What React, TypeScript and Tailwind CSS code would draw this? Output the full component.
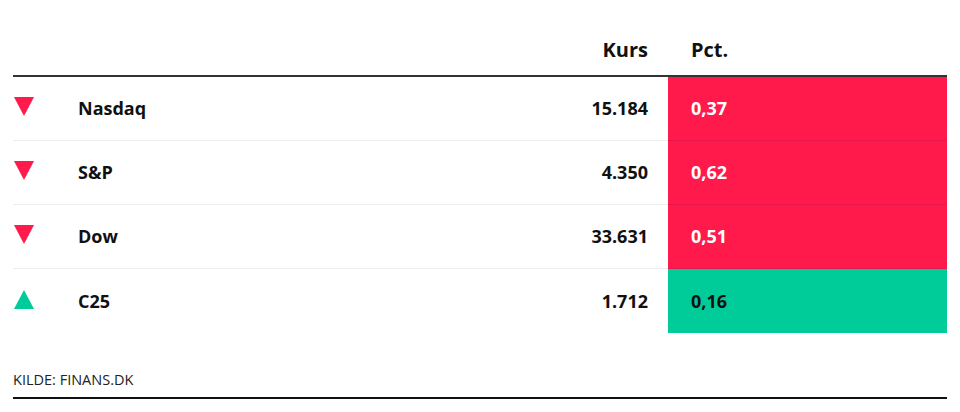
const rows = [
  { name: "Nasdaq", kurs: "15.184", pct: "0,37", up: false },
  { name: "S&P", kurs: "4.350", pct: "0,62", up: false },
  { name: "Dow", kurs: "33.631", pct: "0,51", up: false },
  { name: "C25", kurs: "1.712", pct: "0,16", up: true },
];

function Arrow({ up }: { up: boolean }) {
  return (
    <svg width="20" height="19" viewBox="0 0 20 19" className="block">
      {up ? (
        <polygon points="10,0 20,19 0,19" fill="#00cc99" />
      ) : (
        <polygon points="0,0 20,0 10,19" fill="#ff1a4b" />
      )}
    </svg>
  );
}

export default function App() {
  return (
    <div className="w-[960px] h-[412px] bg-white px-[13px] text-[#111] font-['Open_Sans',sans-serif]">
      <div className="flex h-[75px] items-end pb-[10px] text-[20px] font-bold">
        <div className="flex-1" />
        <div className="w-[200px] pr-[20px] text-right">Kurs</div>
        <div className="w-[279px] pl-[23px]">Pct.</div>
      </div>
      <div className="border-t-2 border-[#333]">
        {rows.map((r, i) => {
          const last = i === rows.length - 1;
          const line = last ? "" : "border-b border-[#eee]";
          return (
            <div key={r.name} className="flex h-[64px] items-stretch text-[18px] font-bold">
              <div className={`flex flex-1 items-center ${line}`}>
                <div className="w-[65px] pl-[1px] pb-[4px]">
                  <Arrow up={r.up} />
                </div>
                <div>{r.name}</div>
              </div>
              <div className={`flex w-[200px] items-center justify-end pr-[20px] ${line}`}>
                {r.kurs}
              </div>
              <div
                className={`flex w-[279px] items-center pl-[23px] ${
                  r.up ? "bg-[#00cc99] text-[#111]" : "bg-[#ff1a4b] text-white border-b border-[#e8174a]"
                }`}
              >
                {r.pct}
              </div>
            </div>
          );
        })}
      </div>
      <div className="mt-[37px] text-[14.5px] leading-[20px] text-[#222]">KILDE: FINANS.DK</div>
      <div className="mt-[7px] border-t-2 border-[#111]" />
    </div>
  );
}
